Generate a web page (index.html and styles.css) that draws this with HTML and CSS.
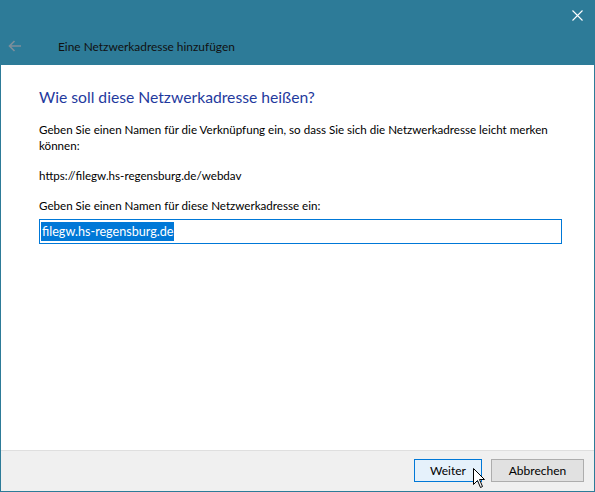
FILE: index.html
```html
<!DOCTYPE html>
<html lang="de">
<head>
<meta charset="utf-8">
<title>Eine Netzwerkadresse hinzufügen</title>
<link rel="stylesheet" href="styles.css">
</head>
<body>
<div class="window">
  <header class="header">
    <div class="caption">
      <svg class="close" width="11" height="11" viewBox="0 0 11 11"><path d="M0.5 0.5 L10.5 10.5 M10.5 0.5 L0.5 10.5" stroke="#ffffff" stroke-width="1.1" fill="none"/></svg>
    </div>
    <div class="titlerow">
      <svg class="back" width="14" height="12" viewBox="0 0 14 12"><path d="M13 6 H1.5 M6.5 1 L1.5 6 L6.5 11" stroke="#7d8f9b" stroke-width="1.6" fill="none"/></svg>
      <span class="title">Eine Netzwerkadresse hinzufügen</span>
    </div>
  </header>
  <main class="content">
    <h1 class="instruction">Wie soll diese Netzwerkadresse heißen?</h1>
    <p class="text">Geben Sie einen Namen für die Verknüpfung ein, so dass Sie sich die Netzwerkadresse leicht merken können:</p>
    <p class="text url">https://filegw.hs-regensburg.de/webdav</p>
    <p class="text label">Geben Sie einen Namen für diese Netzwerkadresse ein:</p>
    <div class="input"><span class="selected">filegw.hs-regensburg.de</span></div>
  </main>
  <footer class="footer">
    <div class="btn primary">Weiter
      <svg class="cursor" width="13" height="21" viewBox="0 0 13 21"><path d="M0.5 0.5 V16.5 L4.5 12.5 L7.5 19.5 L9.5 18.5 L6.5 11.5 H11.5 Z" fill="#ffffff" stroke="#000000" stroke-width="1" stroke-linejoin="miter"/></svg>
    </div>
    <div class="btn">Abbrechen</div>
  </footer>
</div>
</body>
</html>
```
FILE: styles.css
```css
* { box-sizing: border-box; }
html, body { margin: 0; padding: 0; }
body {
  font-family: Lato, "Liberation Sans", Arial, sans-serif;
  font-size: 12px;
  color: #000;
  background: #fff;
}
.window {
  width: 595px;
  height: 492px;
  border: 1px solid #2d7b98;
  display: flex;
  flex-direction: column;
  background: #fff;
}
.header {
  height: 64px;
  background: #2d7b98;
  display: flex;
  flex-direction: column;
}
.caption {
  height: 30px;
  display: flex;
  justify-content: flex-end;
  align-items: flex-start;
  padding: 9px 11px 0 0;
}
.titlerow {
  display: flex;
  align-items: center;
  height: 30px;
  padding-left: 7px;
}
.back { display: block; }
.title {
  margin-left: 36px;
  color: #111;
  font-size: 11.9px;
}
.content {
  flex: 1;
  padding: 22px 28px 0 38px;
}
.instruction {
  margin: 0;
  font-size: 15.7px;
  font-weight: normal;
  color: #1f3a9e;
  line-height: 21px;
}
.text {
  margin: 0;
  line-height: 16px;
  font-size: 11.6px;
}
.instruction + .text { margin-top: 14px; }
.url { margin-top: 14px; }
.label { margin-top: 14px; }
.input {
  margin-top: 5px;
  width: 523px;
  height: 25px;
  border: 1px solid #0078d7;
  padding: 2px 1px;
  display: flex;
  align-items: center;
  font-size: 12.6px;
}
.selected {
  background: #0078d7;
  color: #fff;
  line-height: 19px;
  padding: 0 1px;
}
.footer {
  height: 41px;
  border-top: 1px solid #dfdfdf;
  background: #f0f0f0;
  display: flex;
  justify-content: flex-end;
  align-items: flex-start;
  padding: 8px 10px 0 0;
  gap: 9px;
}
.btn {
  position: relative;
  height: 23px;
  min-width: 68px;
  padding: 0 14px;
  border: 1px solid #adadad;
  background: #e1e1e1;
  display: flex;
  align-items: center;
  justify-content: center;
  font-size: 12px;
}
.btn.primary {
  border-color: #0078d7;
  background: #e5f1fb;
}
.btn:last-child { width: 93px; }
.cursor {
  position: absolute;
  left: 58px;
  top: 8px;
}
```
